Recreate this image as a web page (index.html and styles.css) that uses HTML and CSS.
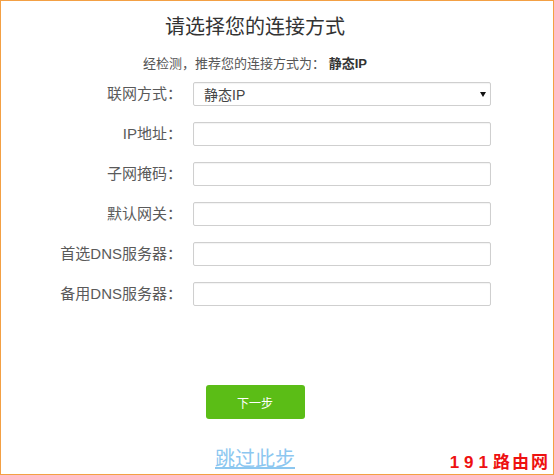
FILE: index.html
```html
<!DOCTYPE html>
<html lang="zh-CN">
<head>
<meta charset="utf-8">
<title>请选择您的连接方式</title>
<link rel="stylesheet" href="styles.css">
</head>
<body>
<div class="frame">
  <div class="inner">
    <h1 class="title">请选择您的连接方式</h1>
    <p class="hint">经检测<span class="p">，</span>推荐您的连接方式为<span class="p">：</span> <b>静态IP</b></p>
    <div class="form">
      <label class="lbl">联网方式<span class="p">：</span></label>
      <div class="select"><span>静态IP</span><i class="arrow"></i></div>
      <label class="lbl">IP地址<span class="p">：</span></label>
      <input class="field" type="text">
      <label class="lbl">子网掩码<span class="p">：</span></label>
      <input class="field" type="text">
      <label class="lbl">默认网关<span class="p">：</span></label>
      <input class="field" type="text">
      <label class="lbl">首选DNS服务器<span class="p">：</span></label>
      <input class="field" type="text">
      <label class="lbl">备用DNS服务器<span class="p">：</span></label>
      <input class="field" type="text">
    </div>
    <button class="next" type="button">下一步</button>
    <a class="skip" href="#">跳过此步</a>
  </div>
  <div class="mark"><span class="num">191</span>路由网</div>
</div>
</body>
</html>
```

FILE: styles.css
```css
html, body {
  margin: 0;
  padding: 0;
  background: #fff;
}
body {
  font-family: "Liberation Sans", "Noto Sans CJK SC", sans-serif;
  color: #555;
}
.p {
  display: inline-block;
  width: 1em;
  text-align: center;
}
.frame {
  position: relative;
  width: 554px;
  height: 475px;
  box-sizing: border-box;
  border: 1px solid #f3a044;
  padding-top: 11px;
}
.inner {
  width: 508px;
  display: flex;
  flex-direction: column;
  align-items: center;
  text-align: center;
}
.title {
  margin: 0;
  font-size: 20px;
  line-height: 30px;
  font-weight: normal;
  color: #333;
}
.hint {
  margin: 12px 0 0;
  font-size: 13px;
  line-height: 20px;
  color: #555;
}
.hint b {
  color: #333;
}
.form {
  align-self: flex-start;
  margin-top: 8px;
  display: grid;
  grid-template-columns: 181px 298px;
  column-gap: 11px;
  row-gap: 16px;
}
.lbl {
  font-size: 15px;
  line-height: 24px;
  color: #5a5a5a;
  text-align: right;
}
.select, .field {
  box-sizing: border-box;
  height: 24px;
  border: 1px solid #cfcfcf;
  border-radius: 2px;
  background: #fff;
  box-shadow: inset 0 1px 1px rgba(0,0,0,0.05);
}
.field {
  margin: 0;
  padding: 0 8px;
  font: inherit;
  font-size: 14px;
}
.select {
  position: relative;
  display: flex;
  align-items: center;
  padding-left: 10px;
  font-size: 14px;
  color: #444;
  text-align: left;
}
.arrow {
  position: absolute;
  right: 4px;
  top: 9px;
  width: 0;
  height: 0;
  border-left: 3px solid transparent;
  border-right: 3px solid transparent;
  border-top: 5px solid #111;
}
.next {
  margin-top: 79px;
  width: 99px;
  height: 34px;
  border: none;
  border-radius: 3px;
  background: #5bbd16;
  color: #fff;
  font-family: "Noto Sans CJK SC", sans-serif;
  font-size: 12px;
  padding: 0;
}
.skip {
  margin-top: 28px;
  font-size: 20px;
  line-height: 24px;
  color: #8cc7f0;
  text-decoration: underline;
  text-decoration-color: #8cc7f0;
}
.mark {
  position: absolute;
  right: 3px;
  bottom: 1px;
  font-family: "Liberation Sans", "Noto Sans CJK SC", sans-serif;
  font-weight: bold;
  font-size: 17px;
  line-height: 20px;
  color: #ee1111;
  letter-spacing: 2px;
}
.mark .num {
  letter-spacing: 5px;
}
```
